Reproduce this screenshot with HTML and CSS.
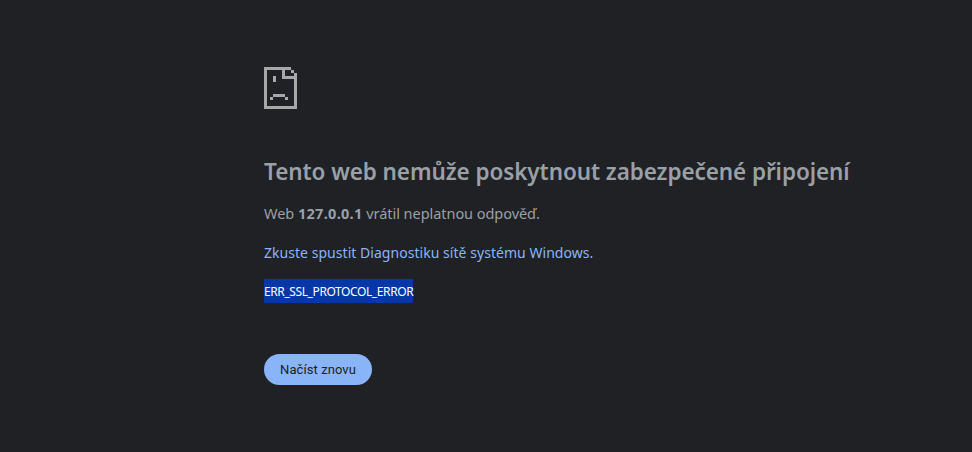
FILE: index.html
```html
<!DOCTYPE html>
<html lang="cs">
<head>
<meta charset="utf-8">
<title>Chyba</title>
<link rel="stylesheet" href="styles.css">
</head>
<body>
<main class="wrapper">
  <svg class="icon" width="34" height="43" viewBox="0 0 34 43" shape-rendering="crispEdges" aria-hidden="true">
    <g fill="#a8a8a8">
      <rect x="0" y="0" width="27" height="3"/>
      <rect x="0" y="0" width="3" height="42"/>
      <rect x="0" y="39" width="33" height="3"/>
      <rect x="30" y="6" width="3" height="36"/>
      <rect x="18" y="0" width="3" height="12"/>
      <rect x="18" y="9" width="15" height="3"/>
      <rect x="27" y="3" width="3" height="3"/>
      <rect x="9" y="9" width="3" height="6"/>
      <rect x="6" y="30" width="3" height="3"/>
      <rect x="9" y="27" width="12" height="3"/>
      <rect x="21" y="30" width="3" height="3"/>
    </g>
  </svg>
  <h1 class="title">Tento web nemůže poskytnout zabezpečené připojení</h1>
  <p class="line">Web <strong class="host">127.0.0.1</strong> vrátil neplatnou odpověď.</p>
  <p class="line link">Zkuste spustit Diagnostiku sítě systému Windows.</p>
  <div class="code"><span class="selected">ERR_SSL_PROTOCOL_ERROR</span></div>
  <button class="reload" type="button">Načíst znovu</button>
</main>
</body>
</html>
```

FILE: styles.css
```css
html, body {
  margin: 0;
  padding: 0;
  height: 100%;
}
body {
  background: #202124;
  color: #9aa0a6;
  font-family: "Noto Sans", sans-serif;
  font-size: 14.5px;
  overflow: hidden;
}
.wrapper {
  box-sizing: border-box;
  width: 600px;
  margin-left: 264px;
  padding-top: 67px;
  display: flex;
  flex-direction: column;
  align-items: flex-start;
}
.icon {
  display: block;
}
.title {
  margin: 47px 0 0;
  font-size: 22.5px;
  line-height: 30px;
  font-weight: 600;
  letter-spacing: -0.08px;
  color: #9aa0a6;
  white-space: nowrap;
}
.line {
  margin: 15px 0 0;
  line-height: 22px;
  letter-spacing: -0.05px;
}
.host {
  font-weight: 700;
  letter-spacing: 0.3px;
}
.link {
  color: #8ab4f8;
  font-size: 14px;
  letter-spacing: 0.04px;
  margin-top: 18px;
}
.code {
  margin-top: 15px;
  font-size: 12px;
  letter-spacing: -0.4px;
  color: #fff;
}
.selected {
  display: block;
  padding-top: 1px;
  line-height: 23px;
  background: #0437a8;
}
.reload {
  margin-top: 51px;
  height: 31px;
  width: 108px;
  padding: 0;
  border: 0;
  border-radius: 16px;
  background: #8ab4f8;
  color: #202124;
  font-family: Roboto, sans-serif;
  font-size: 13px;
  font-weight: 400;
  letter-spacing: 0.08px;
}
```
